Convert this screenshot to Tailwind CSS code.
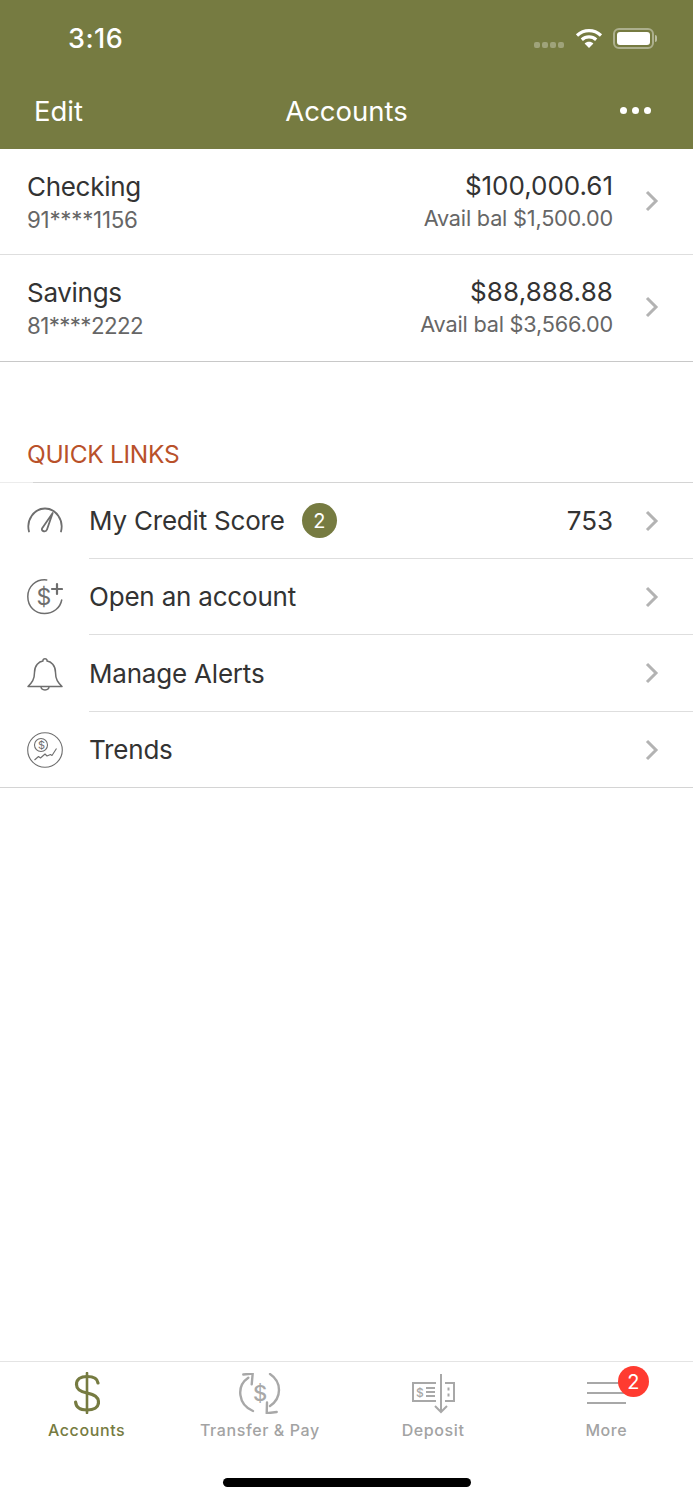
<!DOCTYPE html>
<html lang="en">
<head>
  <meta charset="UTF-8">
  <title>Accounts</title>
  <meta name="viewport" content="width=device-width,initial-scale=1"/>
  <script src="https://cdn.jsdelivr.net/npm/@tailwindcss/browser@4"></script>
</head>
<body class="bg-white font-['Inter','Liberation_Sans',sans-serif] text-[#333333]">
  <div class="relative w-[693px] h-[1500px] flex flex-col overflow-hidden">
    <!-- status bar -->
    <header class="bg-[#767b41] text-white h-[149px] shrink-0 flex flex-col">
      <div class="h-[76px] flex items-start justify-between pl-[68px] pr-[36px]">
        <span class="mt-[23px] text-[27px] leading-[32px] font-medium tracking-[0.5px]">3:16</span>
        <div class="flex items-center mt-[25px] h-[26px]">
          <div class="flex gap-[2px] mt-[13px] mr-[11px]">
            <span class="w-[6px] h-[6px] rounded-[2px] bg-white/30"></span>
            <span class="w-[6px] h-[6px] rounded-[2px] bg-white/30"></span>
            <span class="w-[6px] h-[6px] rounded-[2px] bg-white/30"></span>
            <span class="w-[6px] h-[6px] rounded-[2px] bg-white/30"></span>
          </div>
          <svg width="28" height="22" viewBox="0 0 28 22" fill="none" stroke="white" stroke-width="3.2" class="mr-[10px]">
            <path d="M2 8.500C9 2 19 2 26 8.500"/>
            <path d="M6.800 12.800C11 9 17 9 21.200 12.800"/>
            <path d="M14 21L9.600 16.400C12 14.200 16 14.200 18.400 16.400Z" fill="white" stroke="none"/>
          </svg>
          <div class="w-[41px] h-[21px] rounded-[6px] border-2 border-white/40 p-[2px]">
            <div class="w-full h-full rounded-[3px] bg-white"></div>
          </div>
          <span class="ml-[1px] w-[2px] h-[7px] rounded-r-sm bg-white/50"></span>
        </div>
      </div>
      <div class="relative h-[73px] flex items-start justify-between pl-[34px] pr-[42px]">
        <span class="mt-[18px] text-[27.500px] leading-[34px]">Edit</span>
        <span class="absolute left-0 right-0 top-[18px] text-center text-[27.500px] leading-[34px]">Accounts</span>
        <div class="flex gap-[5px] mt-[31px]">
          <span class="w-[7px] h-[7px] rounded-full bg-white"></span>
          <span class="w-[7px] h-[7px] rounded-full bg-white"></span>
          <span class="w-[7px] h-[7px] rounded-full bg-white"></span>
        </div>
      </div>
    </header>

    <!-- account rows -->
    <section class="border-b border-[#c8c8c8]">
      <div class="h-[106px] flex items-start pl-[27px] pr-[34px] border-b border-[#dedede]">
        <div class="flex-1 pt-[21px]">
          <div class="text-[26px] leading-[33px] tracking-[-0.3px]">Checking</div>
          <div class="mt-[1px] text-[22.300px] leading-[32px] text-[#666666] tracking-[-0.25px]">91****1156</div>
        </div>
        <div class="pt-[21px] pr-[1px] text-right">
          <div class="text-[26px] leading-[32px] tracking-[-0.02px]">$100,000.61</div>
          <div class="text-[21.700px] leading-[32px] text-[#666666] tracking-[-0.2px]">Avail bal $1,500.00</div>
        </div>
        <svg width="14" height="22" viewBox="0 0 14 22" fill="none" stroke="#b3b3b3" stroke-width="3" class="ml-[31px] mt-[41px]"><path d="M2 2l9 9-9 9"/></svg>
      </div>
      <div class="h-[106px] flex items-start pl-[27px] pr-[34px]">
        <div class="flex-1 pt-[21px]">
          <div class="text-[26px] leading-[33px] tracking-[-0.3px]">Savings</div>
          <div class="mt-[1px] text-[22.300px] leading-[32px] text-[#666666] tracking-[-0.6px]">81****2222</div>
        </div>
        <div class="pt-[21px] pr-[1px] text-right">
          <div class="text-[26px] leading-[32px] tracking-[0.1px]">$88,888.88</div>
          <div class="text-[21.700px] leading-[32px] text-[#666666] tracking-[-0.2px]">Avail bal $3,566.00</div>
        </div>
        <svg width="14" height="22" viewBox="0 0 14 22" fill="none" stroke="#b3b3b3" stroke-width="3" class="ml-[31px] mt-[41px]"><path d="M2 2l9 9-9 9"/></svg>
      </div>
    </section>

    <!-- quick links -->
    <h2 class="mt-[76px] pl-[27px] text-[24.500px] leading-[32px] h-[44px] text-[#b9512a] tracking-[-0.3px]">QUICK LINKS</h2>
    <div class="flex h-px"><span class="w-[33px] bg-[#ececec]"></span><span class="flex-1 bg-[#d4d4d4]"></span></div>
    <section class="border-b border-[#d4d4d4]">
      <div class="h-[76px] flex items-center">
        <div class="w-[89px] pl-[27px] shrink-0">
          <svg width="36" height="36" viewBox="0 0 36 36" fill="none" stroke="#6e6e6e" stroke-width="1.800" stroke-linecap="round" stroke-linejoin="round">
            <path d="M2 28.500C-1 17 7 5.500 18 5.500S37 17 34 28.500"/>
            <path d="M25.700 10L20 26.500C19 29.500 14 28.500 15 25.500Z"/>
          </svg>
        </div>
        <div class="flex-1 h-full flex items-center border-b border-[#dedede] pr-[34px]">
          <span class="text-[26px] tracking-[-0.2px]">My Credit Score</span>
          <span class="ml-[17px] w-[35px] h-[35px] rounded-full bg-[#767b41] text-white text-[20px] flex items-center justify-center">2</span>
          <span class="ml-auto pr-[1px] text-[26px] tracking-[0px]">753</span>
          <svg width="14" height="22" viewBox="0 0 14 22" fill="none" stroke="#b3b3b3" stroke-width="3" class="ml-[31px]"><path d="M2 2l9 9-9 9"/></svg>
        </div>
      </div>
      <div class="h-[76px] flex items-center">
        <div class="w-[89px] pl-[27px] shrink-0">
          <svg width="36" height="36" viewBox="0 0 36 36" fill="none" stroke="#6e6e6e" stroke-width="1.500" stroke-linecap="round">
            <path d="M19.700 .900C9 -.300 .800 7.500 .800 17.500c0 10 7 17 16.700 17 8.500 0 15.800-5.500 17.200-13.500"/>
            <path d="M30 5v10M25 10h10" stroke-width="2.200"/>
            <text x="9.500" y="26" font-size="23" fill="#6e6e6e" stroke="none" font-family="Inter">$</text>
          </svg>
        </div>
        <div class="flex-1 h-full flex items-center border-b border-[#dedede] pr-[34px]">
          <span class="flex-1 text-[26px] tracking-[-0.2px]">Open an account</span>
          <svg width="14" height="22" viewBox="0 0 14 22" fill="none" stroke="#b3b3b3" stroke-width="3"><path d="M2 2l9 9-9 9"/></svg>
        </div>
      </div>
      <div class="h-[77px] flex items-center">
        <div class="w-[89px] pl-[27px] shrink-0">
          <svg width="36" height="36" viewBox="0 0 36 36" fill="none" stroke="#6e6e6e" stroke-width="1.500" stroke-linejoin="round">
            <path d="M1 30.500c4-4 6.500-7 6.500-14C7.500 9.500 12 5.500 16 5c-.5-3 4.500-3 4 0 4 .5 8.500 4.500 8.500 11.500 0 7 2.500 10 6.500 14z"/>
            <path d="M14 30.500c0 4.500 8 4.500 8 0"/>
          </svg>
        </div>
        <div class="flex-1 h-full flex items-center border-b border-[#dedede] pr-[34px]">
          <span class="flex-1 text-[26px] tracking-[-0.2px]">Manage Alerts</span>
          <svg width="14" height="22" viewBox="0 0 14 22" fill="none" stroke="#b3b3b3" stroke-width="3"><path d="M2 2l9 9-9 9"/></svg>
        </div>
      </div>
      <div class="h-[75px] flex items-center">
        <div class="w-[89px] pl-[27px] shrink-0">
          <svg width="36" height="36" viewBox="0 0 36 36" fill="none" stroke="#6e6e6e" stroke-width="1.100" stroke-linejoin="round">
            <circle cx="18" cy="18" r="17.300"/>
            <circle cx="14" cy="13" r="6.500"/>
            <text x="11" y="17" font-size="11" fill="#6e6e6e" stroke="none" font-family="Inter">$</text>
            <path d="M7.500 28l4-3.500 2 1.500 4.500-4 2 2 3.500-1.500 1.500 1 4.500-7"/>
          </svg>
        </div>
        <div class="flex-1 h-full flex items-center pr-[34px]">
          <span class="flex-1 text-[26px] tracking-[-0.2px]">Trends</span>
          <svg width="14" height="22" viewBox="0 0 14 22" fill="none" stroke="#b3b3b3" stroke-width="3"><path d="M2 2l9 9-9 9"/></svg>
        </div>
      </div>
    </section>

    <!-- tab bar -->
    <nav class="mt-auto h-[139px] border-t border-[#e4e4e4] relative">
      <div class="grid grid-cols-4 text-[16px] leading-[22px] tracking-[0.6px] text-[#a3a3a3] font-medium">
        <div class="flex flex-col items-center">
          <div class="h-[52px] flex items-end">
            <svg width="26" height="42" viewBox="0 0 26 42" fill="none" stroke="#767b41" stroke-width="3.200" stroke-linecap="round">
              <path d="M24 11C23.500 6.500 19 4.500 13 4.500 6.500 4.500 2.500 7.500 2.500 12.500c0 5 3.500 7 10.500 8.500 7.500 1.700 11.500 3.700 11.500 9.500 0 5-5 7.500-11.500 7.500S2 35.500 1.600 30"/>
              <path d="M13 1v40" stroke-width="2.600"/>
            </svg>
          </div>
          <span class="mt-[5px] text-[#767b41]">Accounts</span>
        </div>
        <div class="flex flex-col items-center">
          <div class="h-[52px] flex items-end">
            <svg width="42" height="41" viewBox="0 0 42 41" fill="none" stroke="#a8a8a8" stroke-width="2.400" stroke-linecap="round" stroke-linejoin="round">
              <path d="M14 38C-1 32 -3 13 9.300 4.700"/>
              <path d="M4.300 1.500l9.400-1 -1 10.800"/>
              <path d="M31 1C43 9 43 25 31 33"/>
              <path d="M28 29.500l-.300 10.800 10-1.300"/>
              <text x="14" y="28" font-size="22" fill="#a8a8a8" stroke="none" font-family="Inter">$</text>
            </svg>
          </div>
          <span class="mt-[5px]">Transfer &amp; Pay</span>
        </div>
        <div class="flex flex-col items-center">
          <div class="h-[52px] flex items-end">
            <svg width="44" height="40" viewBox="0 0 44 40" fill="none" stroke="#a8a8a8" stroke-width="2">
              <path d="M25 9H2v18h23"/>
              <path d="M34 9h9v18h-9"/>
              <path d="M30 0v38"/>
              <path d="M24 32l6 6 6-6"/>
              <path d="M15 14h9M15 18h9M15 22h9"/>
              <path d="M37.500 13.500v3M37.500 19.500v3"/>
              <text x="5" y="23" font-size="12" fill="#a8a8a8" stroke="none" font-family="Inter">$</text>
            </svg>
          </div>
          <span class="mt-[5px]">Deposit</span>
        </div>
        <div class="relative flex flex-col items-center">
          <div class="h-[52px] flex items-end pb-[10px]">
            <div class="w-[39px] flex flex-col gap-[8px]">
              <span class="h-[2px] bg-[#a8a8a8]"></span>
              <span class="h-[2px] bg-[#a8a8a8]"></span>
              <span class="h-[2px] bg-[#a8a8a8]"></span>
            </div>
          </div>
          <span class="mt-[5px]">More</span>
          <span class="absolute left-[98px] top-[4px] w-[31px] h-[31px] rounded-full bg-[#ff3b30] text-white text-[20px] font-normal tracking-normal flex items-center justify-center">2</span>
        </div>
      </div>
      <div class="absolute left-[223px] bottom-[13px] w-[248px] h-[9px] rounded-full bg-black"></div>
    </nav>
  </div>
</body>
</html>
